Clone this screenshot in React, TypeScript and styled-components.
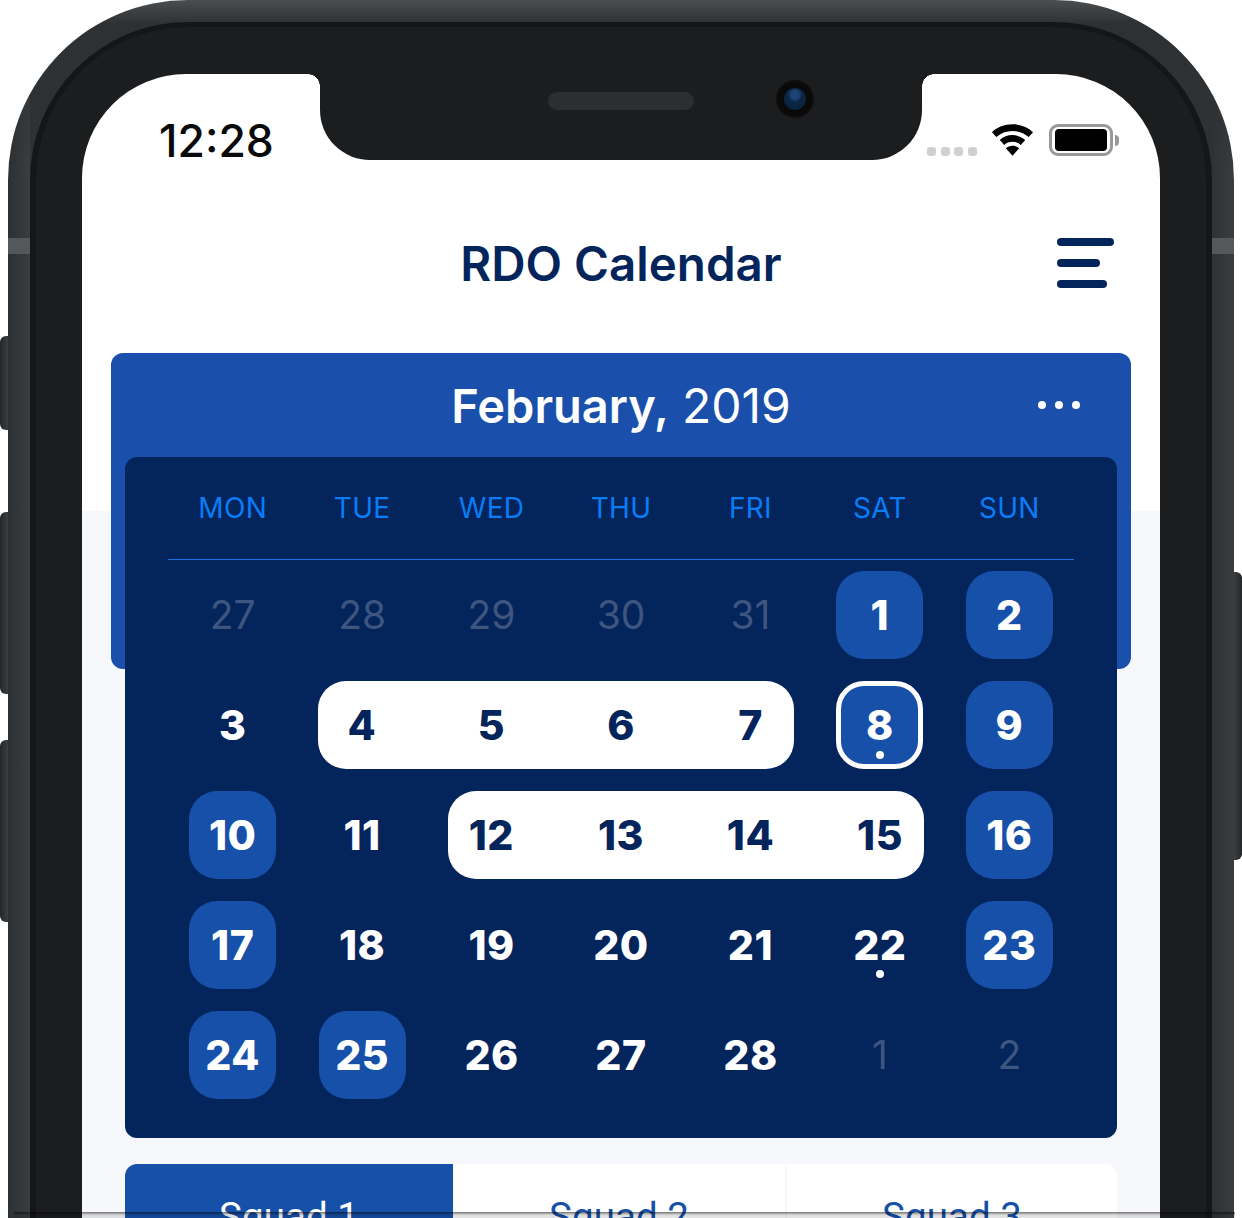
import * as React from 'react';
import styled, { createGlobalStyle } from 'styled-components';

const GlobalStyle = createGlobalStyle`
    html, body {
        margin: 0;
        padding: 0;
        background: #ffffff;
    }
    body {
        width: 1242px;
        height: 1218px;
        overflow: hidden;
        font-family: Inter, "Liberation Sans", sans-serif;
    }
`;

const Stage = styled.div`
    position: relative;
    width: 1242px;
    height: 1218px;
    overflow: hidden;
    display: flex;
    justify-content: center;
`;

const SideKey = styled.div<{ $side: 'left' | 'right'; $top: number; $height: number }>`
    position: absolute;
    top: ${(p) => p.$top}px;
    ${(p) => p.$side}: 0;
    width: 8px;
    height: ${(p) => p.$height}px;
    background: linear-gradient(
        ${(p) => (p.$side === 'left' ? '90deg' : '270deg')},
        #242527,
        #3c3e40
    );
    border-radius: ${(p) => (p.$side === 'left' ? '6px 0 0 6px' : '0 6px 6px 0')};
`;

const Antenna = styled.div<{ $side: 'left' | 'right' }>`
    position: absolute;
    top: 238px;
    ${(p) => p.$side}: 8px;
    width: 22px;
    height: 16px;
    background: #55585a;
`;

const Frame = styled.div`
    width: 1226px;
    height: 1400px;
    flex: none;
    box-sizing: border-box;
    padding: 22px 22px 0;
    border-radius: 180px 180px 0 0;
    background:
        linear-gradient(#4b4e50 0, #2e3133 24px, #34373900 170px),
        linear-gradient(90deg, #2d3032 0, #3b3e40 22px, #2f3234 22px, #2f3234 1204px, #3a3d3f 100%);
`;

const InnerFrame = styled.div`
    height: 100%;
    box-sizing: border-box;
    padding: 5px 6px 0;
    border-radius: 158px 158px 0 0;
    background: #151617;
`;

const Bezel = styled.div`
    height: 100%;
    box-sizing: border-box;
    padding: 47px 46px 0;
    border-radius: 152px 152px 0 0;
    background: #1c1d1f;
`;

const Screen = styled.div`
    height: 100%;
    border-radius: 104px 104px 0 0;
    overflow: hidden;
    background: linear-gradient(#ffffff 437px, #f7f8fc 437px);
`;

const StatusBar = styled.div`
    display: grid;
    grid-template-columns: 238px 602px 238px;
    grid-template-rows: 86px;
`;

const Clock = styled.div`
    padding: 45px 0 0 77px;
    font-size: 44.5px;
    line-height: 44px;
    font-weight: 500;
    color: #0a0a0a;
`;

const Notch = styled.div`
    position: relative;
    display: flex;
    align-items: center;
    background: #1c1d1f;
    border-radius: 0 0 50px 50px;

    &::before,
    &::after {
        content: '';
        position: absolute;
        top: 0;
        width: 12px;
        height: 12px;
    }
    &::before {
        left: -12px;
        background: radial-gradient(circle at 0 100%, transparent 11.5px, #1c1d1f 12px);
    }
    &::after {
        right: -12px;
        background: radial-gradient(circle at 100% 100%, transparent 11.5px, #1c1d1f 12px);
    }
`;

const Speaker = styled.div`
    width: 146px;
    height: 18px;
    margin: -32px 0 0 228px;
    border-radius: 9px;
    background: #2d2e2f;
`;

const Camera = styled.div`
    width: 38px;
    height: 38px;
    margin: -36px 0 0 82px;
    border-radius: 50%;
    box-sizing: border-box;
    padding: 8px;
    background: radial-gradient(circle, #060606 0, #0a0a0b 60%, #1a1b1c 100%);
`;

const Lens = styled.div`
    width: 22px;
    height: 22px;
    border-radius: 50%;
    background: radial-gradient(circle at 50% 32%, #1d4474 0, #1d4474 4px, #0c2745 7px, #0a1f3b 100%);
`;

const StatusIcons = styled.div`
    display: flex;
    align-items: flex-start;
    padding: 50px 0 0 5px;
`;

const SignalDots = styled.div`
    display: flex;
    gap: 4.5px;
    margin: 23px 14px 0 0;
`;

const SignalDot = styled.span`
    width: 9px;
    height: 9px;
    border-radius: 3px;
    background: #d0d0d0;
`;

const WifiIcon = styled.svg`
    width: 43px;
    height: 32px;
    margin-right: 15px;
`;

const Battery = styled.div`
    display: flex;
    align-items: center;
`;

const BatteryShell = styled.div`
    width: 64px;
    height: 32px;
    box-sizing: border-box;
    padding: 2px 3px;
    border: 3px solid #999999;
    border-radius: 9px;
`;

const BatteryFill = styled.div`
    height: 100%;
    border-radius: 4px;
    background: #000000;
`;

const BatteryCap = styled.div`
    width: 4px;
    height: 11px;
    margin-left: 2px;
    border-radius: 0 4px 4px 0;
    background: #999999;
`;

const TitleBar = styled.header`
    display: flex;
    align-items: center;
    justify-content: center;
    position: relative;
    height: 193px;
`;

const Title = styled.h1`
    margin: 15px 0 0;
    font-size: 47.5px;
    line-height: 56px;
    font-weight: 600;
    color: #04245c;
`;

const MenuButton = styled.div`
    position: absolute;
    top: 78px;
    right: 46px;
    display: flex;
    flex-direction: column;
    gap: 13px;
`;

const MenuLine = styled.span<{ $width: number }>`
    display: block;
    width: ${(p) => p.$width}px;
    height: 8px;
    border-radius: 4px;
    background: #04245c;
`;

const MonthCard = styled.section`
    display: flow-root;
    margin: 0 29px;
    border-radius: 12px;
    background: #1a50ab;
`;

const MonthHeader = styled.div`
    position: relative;
    display: flex;
    align-items: center;
    justify-content: center;
    height: 104px;
    font-size: 47px;
    color: #ffffff;
`;

const MonthName = styled.span`
    font-weight: 600;
    margin-right: 13px;
`;

const Year = styled.span`
    font-size: 48px;
    font-weight: 400;
`;

const MoreDots = styled.div`
    position: absolute;
    top: 48px;
    right: 51px;
    display: flex;
    gap: 9px;
`;

const MoreDot = styled.span`
    width: 8px;
    height: 8px;
    border-radius: 50%;
    background: #ffffff;
`;

const CalendarCard = styled.div`
    box-sizing: border-box;
    height: 681px;
    margin: 0 14px -469px;
    padding: 0 43px;
    border-radius: 12px;
    background: #04245c;
`;

const WeekHeader = styled.div`
    display: grid;
    grid-template-columns: repeat(7, 1fr);
    height: 103px;
    box-sizing: border-box;
    align-items: center;
    border-bottom: 1px solid #1673e0;
`;

const WeekDay = styled.div`
    text-align: center;
    font-size: 28px;
    color: #0a7cf5;
    letter-spacing: 0.3px;
`;

const Weeks = styled.div`
    display: flex;
    flex-direction: column;
    gap: 22px;
    margin-top: 11px;
`;

const Week = styled.div`
    display: grid;
    grid-template-columns: repeat(7, 1fr);
    height: 88px;
`;

const Day = styled.div<{ $kind?: 'plain' | 'muted' | 'chip' | 'today' | 'range' }>`
    position: relative;
    box-sizing: border-box;
    width: 87px;
    height: 88px;
    padding-bottom: ${(p) => (p.$kind === 'muted' ? 2 : 0)}px;
    justify-self: center;
    display: flex;
    align-items: center;
    justify-content: center;
    font-size: ${(p) => (p.$kind === 'muted' ? 39 : 41)}px;
    font-weight: ${(p) => (p.$kind === 'muted' ? 400 : 800)};
    letter-spacing: ${(p) => (p.$kind === 'muted' ? 0 : 0.5)}px;
    color: ${(p) =>
        p.$kind === 'muted' ? '#3d557f' : p.$kind === 'range' ? '#04245c' : '#ffffff'};
    background: ${(p) => (p.$kind === 'chip' || p.$kind === 'today' ? '#1650a8' : 'transparent')};
    border: ${(p) => (p.$kind === 'today' ? '5px solid #ffffff' : 'none')};
    border-radius: 28px;
`;

const EventDot = styled.span<{ $bottom: number }>`
    position: absolute;
    left: 50%;
    bottom: ${(p) => p.$bottom}px;
    width: 8px;
    height: 8px;
    margin-left: -4px;
    border-radius: 50%;
    background: #ffffff;
`;

const Range = styled.div`
    grid-column: span 4;
    display: flex;
    justify-content: space-between;
    margin: 0 21px;
    border-radius: 28px;
    background: #ffffff;
`;

const Tabs = styled.div`
    display: grid;
    grid-template-columns: 328px 332px 332px;
    margin: 495px 43px 0;
`;

const Tab = styled.div<{ $active?: boolean; $last?: boolean; $first?: boolean }>`
    height: 120px;
    padding-top: 31px;
    box-sizing: border-box;
    text-align: center;
    font-family: Roboto, Inter, sans-serif;
    font-size: 38.5px;
    line-height: 44px;
    color: ${(p) => (p.$active ? '#ffffff' : '#1650a8')};
    background: ${(p) => (p.$active ? '#1650a8' : '#ffffff')};
    border-radius: ${(p) => (p.$first ? '12px 0 0 0' : p.$last ? '0 12px 0 0' : '0')};
    border-left: ${(p) => (p.$last ? '2px solid #f7f8fc' : 'none')};
`;

const BottomEdge = styled.div`
    position: absolute;
    left: 14px;
    right: 7px;
    bottom: 0;
    height: 6px;
    background: linear-gradient(rgba(0, 0, 0, 0.55), rgba(0, 0, 0, 0.14) 50%, rgba(0, 0, 0, 0.1));
`;

type DayKind = 'plain' | 'muted' | 'chip' | 'today' | 'range';
interface IDay {
    n: number;
    kind: DayKind;
    dot?: boolean;
}

const d = (n: number, kind: DayKind = 'plain', dot?: boolean): IDay => ({ n, kind, dot });

const WEEK_DAYS = ['MON', 'TUE', 'WED', 'THU', 'FRI', 'SAT', 'SUN'];

const DayCell = ({ day }: { day: IDay }) => (
    <Day $kind={day.kind}>
        {day.n}
        {day.dot && <EventDot $bottom={day.kind === 'today' ? 5 : 11} />}
    </Day>
);

export default function App() {
    return (
        <Stage>
            <GlobalStyle />
            <SideKey $side="left" $top={336} $height={94} />
            <SideKey $side="left" $top={512} $height={182} />
            <SideKey $side="left" $top={740} $height={182} />
            <SideKey $side="right" $top={572} $height={288} />
            <Frame>
                <InnerFrame>
                    <Bezel>
                        <Screen>
                            <StatusBar>
                                <Clock>12:28</Clock>
                                <Notch>
                                    <Speaker />
                                    <Camera>
                                        <Lens />
                                    </Camera>
                                </Notch>
                                <StatusIcons>
                                    <SignalDots>
                                        <SignalDot />
                                        <SignalDot />
                                        <SignalDot />
                                        <SignalDot />
                                    </SignalDots>
                                    <WifiIcon viewBox="0 0 44 32">
                                        <path d="M22 0C13.500 0 6.500 3 1 8l4.500 5C10 9 15.500 6.800 22 6.800S34 9 38.500 13L43 8C37.500 3 30.500 0 22 0Z" />
                                        <path d="M22 11c-5 0-9.500 1.800-13 5l4.500 5c2.300-2 5.200-3.200 8.500-3.200s6.200 1.200 8.500 3.200l4.500-5c-3.500-3.200-8-5-13-5Z" />
                                        <path d="M22 22c-2.700 0-5 .9-6.800 2.500L22 32l6.800-7.500C27 22.900 24.700 22 22 22Z" />
                                    </WifiIcon>
                                    <Battery>
                                        <BatteryShell>
                                            <BatteryFill />
                                        </BatteryShell>
                                        <BatteryCap />
                                    </Battery>
                                </StatusIcons>
                            </StatusBar>
                            <TitleBar>
                                <Title>RDO Calendar</Title>
                                <MenuButton>
                                    <MenuLine $width={57} />
                                    <MenuLine $width={43} />
                                    <MenuLine $width={50} />
                                </MenuButton>
                            </TitleBar>
                            <MonthCard>
                                <MonthHeader>
                                    <MonthName>February,</MonthName>
                                    <Year>2019</Year>
                                    <MoreDots>
                                        <MoreDot />
                                        <MoreDot />
                                        <MoreDot />
                                    </MoreDots>
                                </MonthHeader>
                                <CalendarCard>
                                    <WeekHeader>
                                        {WEEK_DAYS.map((w) => (
                                            <WeekDay key={w}>{w}</WeekDay>
                                        ))}
                                    </WeekHeader>
                                    <Weeks>
                                        <Week>
                                            {[27, 28, 29, 30, 31].map((n) => (
                                                <DayCell key={n} day={d(n, 'muted')} />
                                            ))}
                                            <DayCell day={d(1, 'chip')} />
                                            <DayCell day={d(2, 'chip')} />
                                        </Week>
                                        <Week>
                                            <DayCell day={d(3)} />
                                            <Range>
                                                {[4, 5, 6, 7].map((n) => (
                                                    <DayCell key={n} day={d(n, 'range')} />
                                                ))}
                                            </Range>
                                            <DayCell day={d(8, 'today', true)} />
                                            <DayCell day={d(9, 'chip')} />
                                        </Week>
                                        <Week>
                                            <DayCell day={d(10, 'chip')} />
                                            <DayCell day={d(11)} />
                                            <Range>
                                                {[12, 13, 14, 15].map((n) => (
                                                    <DayCell key={n} day={d(n, 'range')} />
                                                ))}
                                            </Range>
                                            <DayCell day={d(16, 'chip')} />
                                        </Week>
                                        <Week>
                                            <DayCell day={d(17, 'chip')} />
                                            <DayCell day={d(18)} />
                                            <DayCell day={d(19)} />
                                            <DayCell day={d(20)} />
                                            <DayCell day={d(21)} />
                                            <DayCell day={d(22, 'plain', true)} />
                                            <DayCell day={d(23, 'chip')} />
                                        </Week>
                                        <Week>
                                            <DayCell day={d(24, 'chip')} />
                                            <DayCell day={d(25, 'chip')} />
                                            <DayCell day={d(26)} />
                                            <DayCell day={d(27)} />
                                            <DayCell day={d(28)} />
                                            <DayCell day={d(1, 'muted')} />
                                            <DayCell day={d(2, 'muted')} />
                                        </Week>
                                    </Weeks>
                                </CalendarCard>
                            </MonthCard>
                            <Tabs>
                                <Tab $active $first>Squad 1</Tab>
                                <Tab>Squad 2</Tab>
                                <Tab $last>Squad 3</Tab>
                            </Tabs>
                        </Screen>
                    </Bezel>
                </InnerFrame>
            </Frame>
            <Antenna $side="left" />
            <Antenna $side="right" />
            <BottomEdge />
        </Stage>
    );
}
